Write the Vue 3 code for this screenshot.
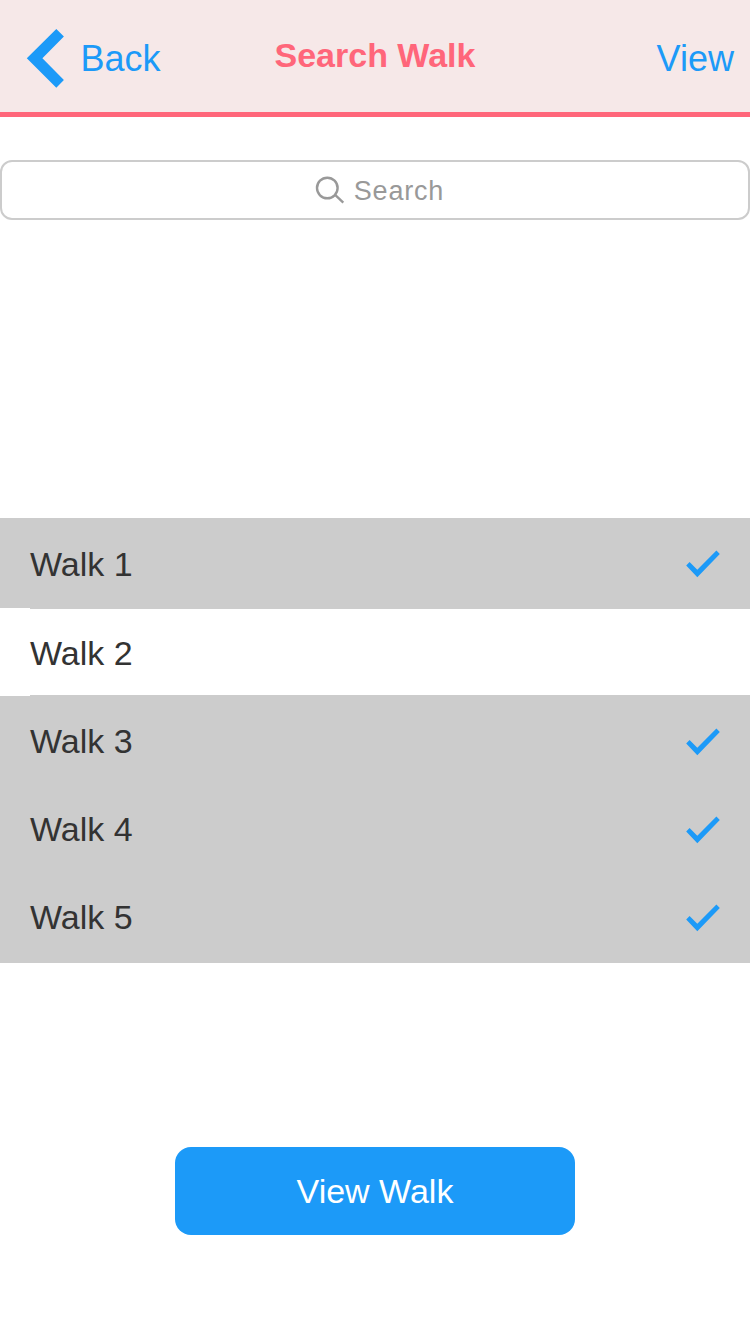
<script setup>
import { ref } from 'vue'

const walks = ref([
  { name: 'Walk 1', selected: true },
  { name: 'Walk 2', selected: false },
  { name: 'Walk 3', selected: true },
  { name: 'Walk 4', selected: true },
  { name: 'Walk 5', selected: true },
])
</script>

<template>
  <main class="screen">
    <header class="bar">
      <a class="back">
        <svg class="chevron" width="38" height="60" viewBox="0 0 38 60">
          <path d="M30.3 0.9 L37.9 8.5 L16.4 30.2 L37.9 51.9 L30.3 59.7 L0.8 30.2 Z" fill="#1c9af8" />
        </svg>
        <span>Back</span>
      </a>
      <h1 class="title">Search Walk</h1>
      <a class="view">View</a>
    </header>

    <div class="search">
      <svg width="30" height="30" viewBox="0 0 30 30" fill="none" stroke="#999" stroke-width="2.4">
        <circle cx="12.3" cy="13" r="10.3" />
        <path d="M19.6 19.4 L28.3 27.6" />
      </svg>
      <span class="placeholder">Search</span>
    </div>

    <ul class="list">
      <li v-for="walk in walks" :key="walk.name" class="row" :class="{ selected: walk.selected }">
        <span>{{ walk.name }}</span>
        <svg v-if="walk.selected" class="check" width="34" height="28" viewBox="0 0 34 28">
          <path d="M0.2 15.4 L3.6 12 L11.3 19.7 L30.4 0.5 L33.8 4 L11.3 27.2 Z" fill="#1c9af8" />
        </svg>
      </li>
    </ul>

    <button class="action">View Walk</button>
  </main>
</template>

<style>
body {
  background: #fff;
}
</style>

<style scoped>
.screen {
  display: flex;
  flex-direction: column;
  box-sizing: border-box;
  width: 750px;
  height: 1334px;
  overflow: hidden;
  font-family: "Liberation Sans", Arial, sans-serif;
}
.bar {
  display: grid;
  grid-template-columns: 1fr auto 1fr;
  align-items: start;
  box-sizing: border-box;
  height: 117px;
  padding: 0 16px 0 26px;
  background: #f6e8e8;
  border-bottom: 5px solid #ff667a;
}
.back {
  display: flex;
  align-items: center;
  gap: 16.5px;
  margin-top: 28px;
  height: 61px;
  color: #1c9af8;
  font-size: 36px;
  line-height: 42px;
}
.chevron {
  align-self: flex-start;
}
.title {
  margin: 35px 10px 0 0;
  color: #ff667a;
  font-size: 34px;
  font-weight: 700;
  line-height: 40px;
}
.view {
  justify-self: end;
  margin-top: 38px;
  color: #1c9af8;
  font-size: 36px;
  line-height: 42px;
}
.search {
  display: flex;
  align-items: center;
  justify-content: center;
  gap: 9px;
  box-sizing: border-box;
  height: 60px;
  margin-top: 43px;
  padding-left: 9px;
  border: 2px solid #ccc;
  border-radius: 12px;
  color: #999;
}
.placeholder {
  padding-top: 1px;
  font-size: 27px;
  line-height: 34px;
  letter-spacing: 0.8px;
}
.list {
  margin: 298px 0 0;
  padding: 0;
  list-style: none;
}
.row {
  display: flex;
  align-items: flex-start;
  justify-content: space-between;
  box-sizing: border-box;
  height: 88px;
  padding: 25px 30px 0;
  color: #333;
  font-size: 34px;
  line-height: 40px;
}
.row:first-child {
  height: 90px;
  padding-top: 26px;
}
.row:last-child {
  height: 91px;
}
.row.selected {
  background: #ccc;
}
/* Inset hairlines above and below an unselected row */
.row:not(.selected) {
  background:
    linear-gradient(#ccc, #ccc) 30px 0 / 100% 1px no-repeat,
    linear-gradient(#ccc, #ccc) 30px 100% / 100% 1px no-repeat;
}
.check {
  margin-top: 7px;
}
.row:first-child .check {
  margin-top: 6px;
}
.action {
  align-self: center;
  width: 400px;
  height: 88px;
  margin-top: 184px;
  padding: 0;
  border: 0;
  border-radius: 16px;
  background: #1c9af8;
  color: #fff;
  font-family: inherit;
  font-size: 34px;
  line-height: 40px;
}
</style>
